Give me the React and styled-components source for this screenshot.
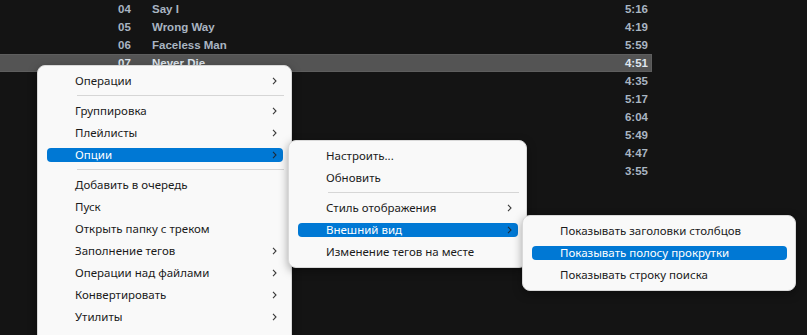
import styled, { createGlobalStyle } from "styled-components";

const tracks = [
  { no: "04", title: "Say I", time: "5:16" },
  { no: "05", title: "Wrong Way", time: "4:19" },
  { no: "06", title: "Faceless Man", time: "5:59" },
  { no: "07", title: "Never Die", time: "4:51", selected: true },
  { no: "08", title: "Dust", time: "4:35" },
  { no: "09", title: "Light", time: "5:17" },
  { no: "10", title: "Home", time: "6:04" },
  { no: "11", title: "Rain", time: "5:49" },
  { no: "12", title: "Stone", time: "4:47" },
  { no: "13", title: "Ashes", time: "3:55" },
];

const mainMenu = [
  { label: "Операции", sub: true },
  { sep: true },
  { label: "Группировка", sub: true },
  { label: "Плейлисты", sub: true },
  { label: "Опции", sub: true, active: true },
  { sep: true },
  { label: "Добавить в очередь" },
  { label: "Пуск" },
  { label: "Открыть папку с треком" },
  { label: "Заполнение тегов", sub: true },
  { label: "Операции над файлами", sub: true },
  { label: "Конвертировать", sub: true },
  { label: "Утилиты", sub: true },
  { label: "ReplayGain", sub: true },
];

const optionsMenu = [
  { label: "Настроить..." },
  { label: "Обновить" },
  { sep: true },
  { label: "Стиль отображения", sub: true },
  { label: "Внешний вид", sub: true, active: true },
  { label: "Изменение тегов на месте" },
];

const viewMenu = [
  { label: "Показывать заголовки столбцов" },
  { label: "Показывать полосу прокрутки", active: true },
  { label: "Показывать строку поиска" },
];

const Chevron = () => (
  <svg width="5" height="8" viewBox="0 0 5 8">
    <path d="M1 0.8 L4 4 L1 7.2" fill="none" stroke="currentColor" strokeWidth="1.1" />
  </svg>
);

const ContextMenu = ({ items, x, y, width }) => (
  <Menu $x={x} $y={y} $w={width}>
    {items.map((item, i) =>
      item.sep ? (
        <Separator key={i} />
      ) : (
        <Item key={i}>
          <ItemBody $active={item.active}>
            <span>{item.label}</span>
            {item.sub && (
              <Arrow $active={item.active}>
                <Chevron />
              </Arrow>
            )}
          </ItemBody>
        </Item>
      )
    )}
  </Menu>
);

export default function App() {
  return (
    <>
      <GlobalStyle />
      <Screen>
        <TrackList>
          {tracks.map((t) => (
            <Row key={t.no} $selected={t.selected}>
              <Num>{t.no}</Num>
              <Title>{t.title}</Title>
              <Time>{t.time}</Time>
            </Row>
          ))}
        </TrackList>
        <ContextMenu items={mainMenu} x={37} y={65} width={255} />
        <ContextMenu items={optionsMenu} x={288} y={140} width={239} />
        <ContextMenu items={viewMenu} x={522} y={215} width={274} />
      </Screen>
    </>
  );
}

const GlobalStyle = createGlobalStyle`
  html, body {
    margin: 0;
    padding: 0;
    background: #141414;
  }
`;

const Screen = styled.div`
  position: relative;
  width: 807px;
  height: 335px;
  overflow: hidden;
  background: #141414;
`;

const TrackList = styled.div`
  display: flex;
  flex-direction: column;
  width: 652px;
`;

const Row = styled.div`
  display: grid;
  grid-template-columns: 118px 34px 1fr 44px;
  align-items: center;
  height: 18px;
  box-sizing: border-box;
  font-family: "Liberation Sans", Arial, sans-serif;
  font-weight: bold;
  font-size: 11.5px;
  color: ${({ $selected }) => ($selected ? "#dfe6ee" : "#a9b5c2")};
  background: ${({ $selected }) => ($selected ? "#545454" : "transparent")};
  border: 1px solid ${({ $selected }) => ($selected ? "#5e5e5e" : "transparent")};
  border-left: none;
`;

const Num = styled.span`
  grid-column: 2;
`;

const Title = styled.span`
  grid-column: 3;
  white-space: nowrap;
`;

const Time = styled.span`
  grid-column: 4;
  text-align: right;
  padding-right: 3px;
`;

const Menu = styled.div`
  position: absolute;
  left: ${({ $x }) => $x}px;
  top: ${({ $y }) => $y}px;
  width: ${({ $w }) => $w}px;
  box-sizing: border-box;
  padding: 4px 0;
  background: #f9f9f9;
  border: 1px solid #d9d9d9;
  border-radius: 8px;
  box-shadow: 0 3px 10px rgba(0, 0, 0, 0.35);
  font-family: "Noto Sans", "Open Sans", sans-serif;
  font-size: 11.5px;
  color: #1b1b1b;
`;

const Item = styled.div`
  height: 22px;
  padding: 4px 8px 4px 9px;
  box-sizing: border-box;
`;

const ItemBody = styled.div`
  display: flex;
  align-items: center;
  justify-content: space-between;
  height: 14px;
  padding: 0 6px 0 28px;
  border-radius: 4px;
  line-height: 14px;
  white-space: nowrap;
  background: ${({ $active }) => ($active ? "#0078d4" : "transparent")};
  color: ${({ $active }) => ($active ? "#ffffff" : "#1b1b1b")};
`;

const Arrow = styled.span`
  display: flex;
  color: ${({ $active }) => ($active ? "#1d2b3a" : "#3a3a3a")};
`;

const Separator = styled.div`
  height: 1px;
  margin: 3px 7px 4px 39px;
  background: #d6d6d6;
`;
